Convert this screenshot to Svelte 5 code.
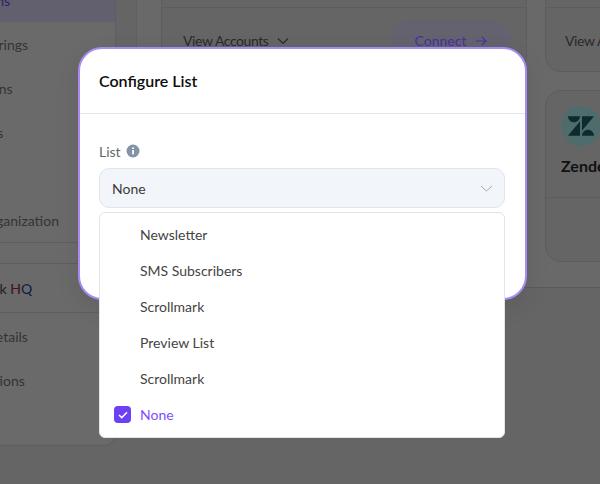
<script lang="ts">
  const topNav = ["Runs", "Pairings", "Plans", "Ads", "", "Organization"];
  const subNav = ["My Details", "Questions"];
  const options = ["Newsletter", "SMS Subscribers", "Scrollmark", "Preview List", "Scrollmark", "None"];
  let selected = $state(5);
</script>

<div class="page">
  <aside class="sidebar">
    <ul class="nav">
      {#each topNav as item, i}
        <li class="nav-item" class:nav-item--active={i === 0}><span class="nav-label">{item}</span></li>
      {/each}
    </ul>
    <div class="workspace">Scrollmark <b class="hq-h">H</b><b class="hq-q">Q</b></div>
    <ul class="nav nav--sub">
      {#each subNav as item}
        <li class="nav-item nav-item--sub"><span class="nav-label nav-label--sub">{item}</span></li>
      {/each}
    </ul>
  </aside>

  <main class="panel">
    <div class="cards">
      <section class="card">
        <div class="card-body"></div>
        <footer class="card-foot">
          <span class="accounts">View Accounts
            <svg width="12" height="8" viewBox="0 0 12 8"><path d="M1 1.5 6 6.5 11 1.5" fill="none" stroke="#2b2b2b" stroke-width="1.2" /></svg>
          </span>
          <button type="button" class="connect">Connect
            <svg width="12" height="10" viewBox="0 0 12 10"><path d="M1 5H11M7 1 11 5 7 9" fill="none" stroke="#46339a" stroke-width="1.1" /></svg>
          </button>
        </footer>
      </section>
      <section class="card">
        <div class="card-body"></div>
        <footer class="card-foot card-foot--side"><span class="accounts">View Accounts</span></footer>
      </section>
      <section class="card"></section>
      <section class="card">
        <div class="card-body">
          <div class="logo">
            <svg width="26" height="26" viewBox="0 0 24 24"><path fill="#0e2a2c" d="M12.914 2.904V16.29L24 2.905H12.914zM0 2.906C0 5.966 2.483 8.45 5.543 8.45s5.542-2.484 5.543-5.544H0zm11.086 4.807L0 21.096h11.086V7.713zm7.371 7.84c-3.06 0-5.543 2.48-5.543 5.543H24c0-3.06-2.48-5.543-5.543-5.543z" /></svg>
          </div>
          <div class="card-name">Zendesk</div>
        </div>
        <footer class="card-foot"></footer>
      </section>
    </div>
  </main>

  <div class="modal">
    <header class="modal-head">Configure List</header>
    <div class="modal-body">
      <div class="label">List
        <svg width="14" height="14" viewBox="0 0 14 14"><circle cx="7" cy="7" r="6.5" fill="#8494a6" /><rect x="6.2" y="6" width="1.7" height="4.4" fill="#fff" /><rect x="6.2" y="3.4" width="1.7" height="1.6" fill="#fff" /></svg>
      </div>
      <div class="select-wrap">
        <div class="select">
          <span>{options[selected]}</span>
          <svg width="13" height="7" viewBox="0 0 13 7"><path d="M1 1 6.5 6 12 1" fill="none" stroke="#a3adbb" stroke-width="1" /></svg>
        </div>
        <ul class="menu">
          {#each options as option, i}
            <li class="option" class:option--selected={i === selected}>
              {#if i === selected}
                <span class="check">
                  <svg width="10" height="8" viewBox="0 0 10 8"><path d="M1 4 3.8 6.6 9 1.2" fill="none" stroke="#fff" stroke-width="1.5" /></svg>
                </span>
              {/if}
              {option}
            </li>
          {/each}
        </ul>
      </div>
    </div>
  </div>
</div>

<style>
  :global(body) {
    margin: 0;
  }

  .page {
    position: relative;
    display: flex;
    width: 600px;
    height: 484px;
    overflow: hidden;
    background: #656566;
    font-family: Lato, "Liberation Sans", sans-serif;
    font-size: 14px;
    color: #333;
  }

  ul {
    list-style: none;
    margin: 0;
    padding: 0;
  }

  .sidebar {
    flex: none;
    width: 116px;
    height: 446px;
    box-sizing: border-box;
    border-right: 1px solid #5e5e60;
    border-bottom: 1px solid #5e5e60;
    border-bottom-right-radius: 12px;
    background: #6a6a6a;
    overflow: hidden;
  }

  .nav {
    display: flex;
    flex-direction: column;
    gap: 4px;
    margin-top: -18px;
    border-bottom: 1px solid #5e5e60;
  }

  .nav--sub {
    margin-top: 0;
    padding-top: 4px;
    border-bottom: none;
  }

  .nav-item {
    height: 40px;
    line-height: 38px;
    color: #343434;
    white-space: nowrap;
  }

  .nav-item--sub {
    line-height: 40px;
  }

  .nav-item--active {
    background: #625f6e;
    color: #2c2566;
  }

  .nav-label {
    display: block;
    margin-left: -20px;
  }

  .nav-label--sub {
    margin-left: -38px;
  }

  .workspace {
    height: 48px;
    margin-top: 20px;
    line-height: 50px;
    border-top: 1px solid #5e5e60;
    border-bottom: 1px solid #5e5e60;
    text-indent: -58px;
    white-space: nowrap;
    color: #262626;
    font-weight: 500;
  }

  .hq-h {
    font-weight: 500;
    color: #4a1414;
  }

  .hq-q {
    font-weight: 500;
    color: #14204a;
  }

  .panel {
    flex: none;
    width: 600px;
    height: 287px;
    margin-left: 20px;
    padding-left: 24px;
    border-left: 1px solid #5f5f61;
    border-bottom: 1px solid #5a5a5c;
    background: #696969;
  }

  .cards {
    display: grid;
    grid-template-columns: 366px 260px;
    grid-auto-rows: 172px;
    gap: 18px;
    margin-top: -100px;
  }

  .card {
    display: flex;
    flex-direction: column;
    box-sizing: border-box;
    border: 1px solid #5d5d5f;
    border-radius: 16px;
    background: #656566;
  }

  .card-body {
    flex: 1;
    padding: 15px 15px;
  }

  .card-foot {
    display: flex;
    flex: none;
    align-items: center;
    justify-content: space-between;
    box-sizing: border-box;
    height: 64px;
    padding: 0 15px 0 21px;
    border-top: 1px solid #5d5d5f;
  }

  .card-foot--side {
    padding-left: 19px;
  }

  .accounts {
    display: flex;
    align-items: center;
    gap: 9px;
    padding-top: 2px;
    letter-spacing: -0.42px;
    color: #2a2a2a;
    white-space: nowrap;
  }

  .connect {
    display: flex;
    align-items: center;
    justify-content: center;
    gap: 9px;
    width: 120px;
    height: 40px;
    padding: 2px 0 0;
    border: none;
    border-radius: 20px;
    background: #64626f;
    font: inherit;
    color: #46339a;
  }

  .logo {
    display: flex;
    align-items: center;
    justify-content: center;
    width: 40px;
    height: 40px;
    border-radius: 50%;
    background: #4f6c6d;
  }

  .card-name {
    margin-top: 10px;
    font-size: 16px;
    font-weight: 700;
    color: #111;
  }

  .modal {
    position: absolute;
    top: 47px;
    left: 78px;
    box-sizing: border-box;
    width: 449px;
    height: 253px;
    border: 2px solid #a78bf5;
    border-radius: 24px;
    background: #fff;
    box-shadow: 0 8px 24px rgba(0, 0, 0, 0.08);
  }

  .modal-head {
    height: 64px;
    padding-left: 19px;
    line-height: 64px;
    border-bottom: 1px solid #e2e5ec;
    font-size: 16px;
    font-weight: 600;
    color: #0d0d0d;
  }

  .modal-body {
    padding: 27px 20px 0 19px;
  }

  .label {
    display: flex;
    align-items: center;
    gap: 5px;
    height: 20px;
    color: #666;
  }

  .select-wrap {
    position: relative;
    margin-top: 7px;
  }

  .select {
    display: flex;
    align-items: center;
    justify-content: space-between;
    box-sizing: border-box;
    height: 40px;
    padding: 0 11px 0 12px;
    border: 1px solid #e0e5ec;
    border-radius: 10px;
    background: #f2f5f9;
    color: #3a3a3a;
  }

  .menu {
    position: absolute;
    top: 44px;
    left: 0;
    right: 0;
    box-sizing: border-box;
    height: 226px;
    padding-top: 4px;
    border: 1px solid #e0e5ec;
    border-radius: 6px;
    background: #fff;
  }

  .option {
    position: relative;
    height: 36px;
    padding-left: 40px;
    line-height: 36px;
    color: #444;
  }

  .option--selected {
    color: #7c4dff;
  }

  .check {
    position: absolute;
    top: 9px;
    left: 14px;
    display: flex;
    align-items: center;
    justify-content: center;
    width: 17px;
    height: 17px;
    border-radius: 4px;
    background: #6d3ff5;
  }
</style>
